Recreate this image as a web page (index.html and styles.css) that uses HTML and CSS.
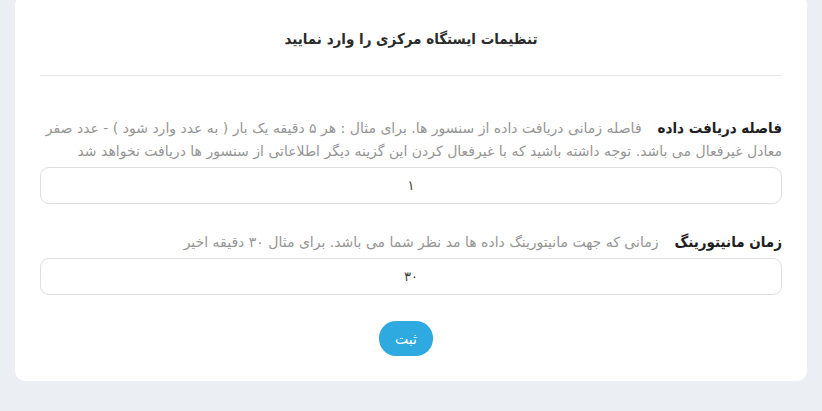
FILE: index.html
```html
<!DOCTYPE html>
<html lang="fa" dir="rtl">
<head>
<meta charset="utf-8">
<title>تنظیمات ایستگاه مرکزی</title>
<link rel="stylesheet" href="styles.css">
</head>
<body>
<main class="card">
  <header class="card-head">
    <h1 class="card-title">تنظیمات ایستگاه مرکزی را وارد نمایید</h1>
  </header>
  <form class="settings">
    <div class="field">
      <div class="field-text"><label class="field-label" for="fetch">فاصله دریافت داده</label><span class="field-help">فاصله زمانی دریافت داده از سنسور ها. برای مثال : هر ۵ دقیقه یک بار ( به عدد وارد شود ) - عدد صفر معادل غیرفعال می باشد. توجه داشته باشید که با غیرفعال کردن این گزینه دیگر اطلاعاتی از سنسور ها دریافت نخواهد شد</span></div>
      <input class="field-input" id="fetch" type="text" value="۱">
    </div>
    <div class="field">
      <div class="field-text"><label class="field-label" for="monitor">زمان مانیتورینگ</label><span class="field-help">زمانی که جهت مانیتورینگ داده ها مد نظر شما می باشد. برای مثال ۳۰ دقیقه اخیر</span></div>
      <input class="field-input" id="monitor" type="text" value="۳۰">
    </div>
    <div class="actions">
      <button class="btn-submit" type="button">ثبت</button>
    </div>
  </form>
</main>
</body>
</html>
```
FILE: styles.css
```css
* { box-sizing: border-box; }

html, body {
  margin: 0;
  padding: 0;
  background: #ebeef3;
  font-family: "DejaVu Sans", "Noto Sans", sans-serif;
  color: #333;
}

body {
  padding: 0 15px;
}

.card {
  margin-top: -5px;
  background: #fff;
  border-radius: 10px;
  padding: 0 25px 25px;
}

.card-head {
  padding: 31px 0 23px;
  border-bottom: 1px solid #e6e6e6;
  text-align: center;
}

.card-title {
  margin: 0;
  font-family: "DejaVu Sans Condensed", "DejaVu Sans", sans-serif;
  font-size: 15px;
  line-height: 26px;
  font-weight: bold;
  color: #2b2b2b;
}

.settings {
  padding-top: 41px;
}

.field + .field {
  margin-top: 27px;
}

.field-text {
  margin: 0 0 4px;
  font-size: 14px;
  line-height: 23px;
  color: #959595;
}

.field-label {
  display: inline-block;
  font-family: "DejaVu Sans Condensed", "DejaVu Sans", sans-serif;
  font-size: 15px;
  font-weight: bold;
  color: #1e1e1e;
  margin-left: 16px;
}

.field-input {
  display: block;
  width: 100%;
  height: 37px;
  border: 1px solid #dedede;
  border-radius: 9px;
  background: #fff;
  text-align: center;
  font-family: inherit;
  font-size: 13px;
  color: #444;
  outline: none;
}

.actions {
  display: flex;
  justify-content: center;
  padding-top: 26px;
  padding-right: 10px;
}

.btn-submit {
  width: 54px;
  height: 35px;
  border: none;
  border-radius: 17px;
  background: #2faae1;
  color: #fff;
  font-family: inherit;
  font-size: 14px;
  cursor: pointer;
}
```
